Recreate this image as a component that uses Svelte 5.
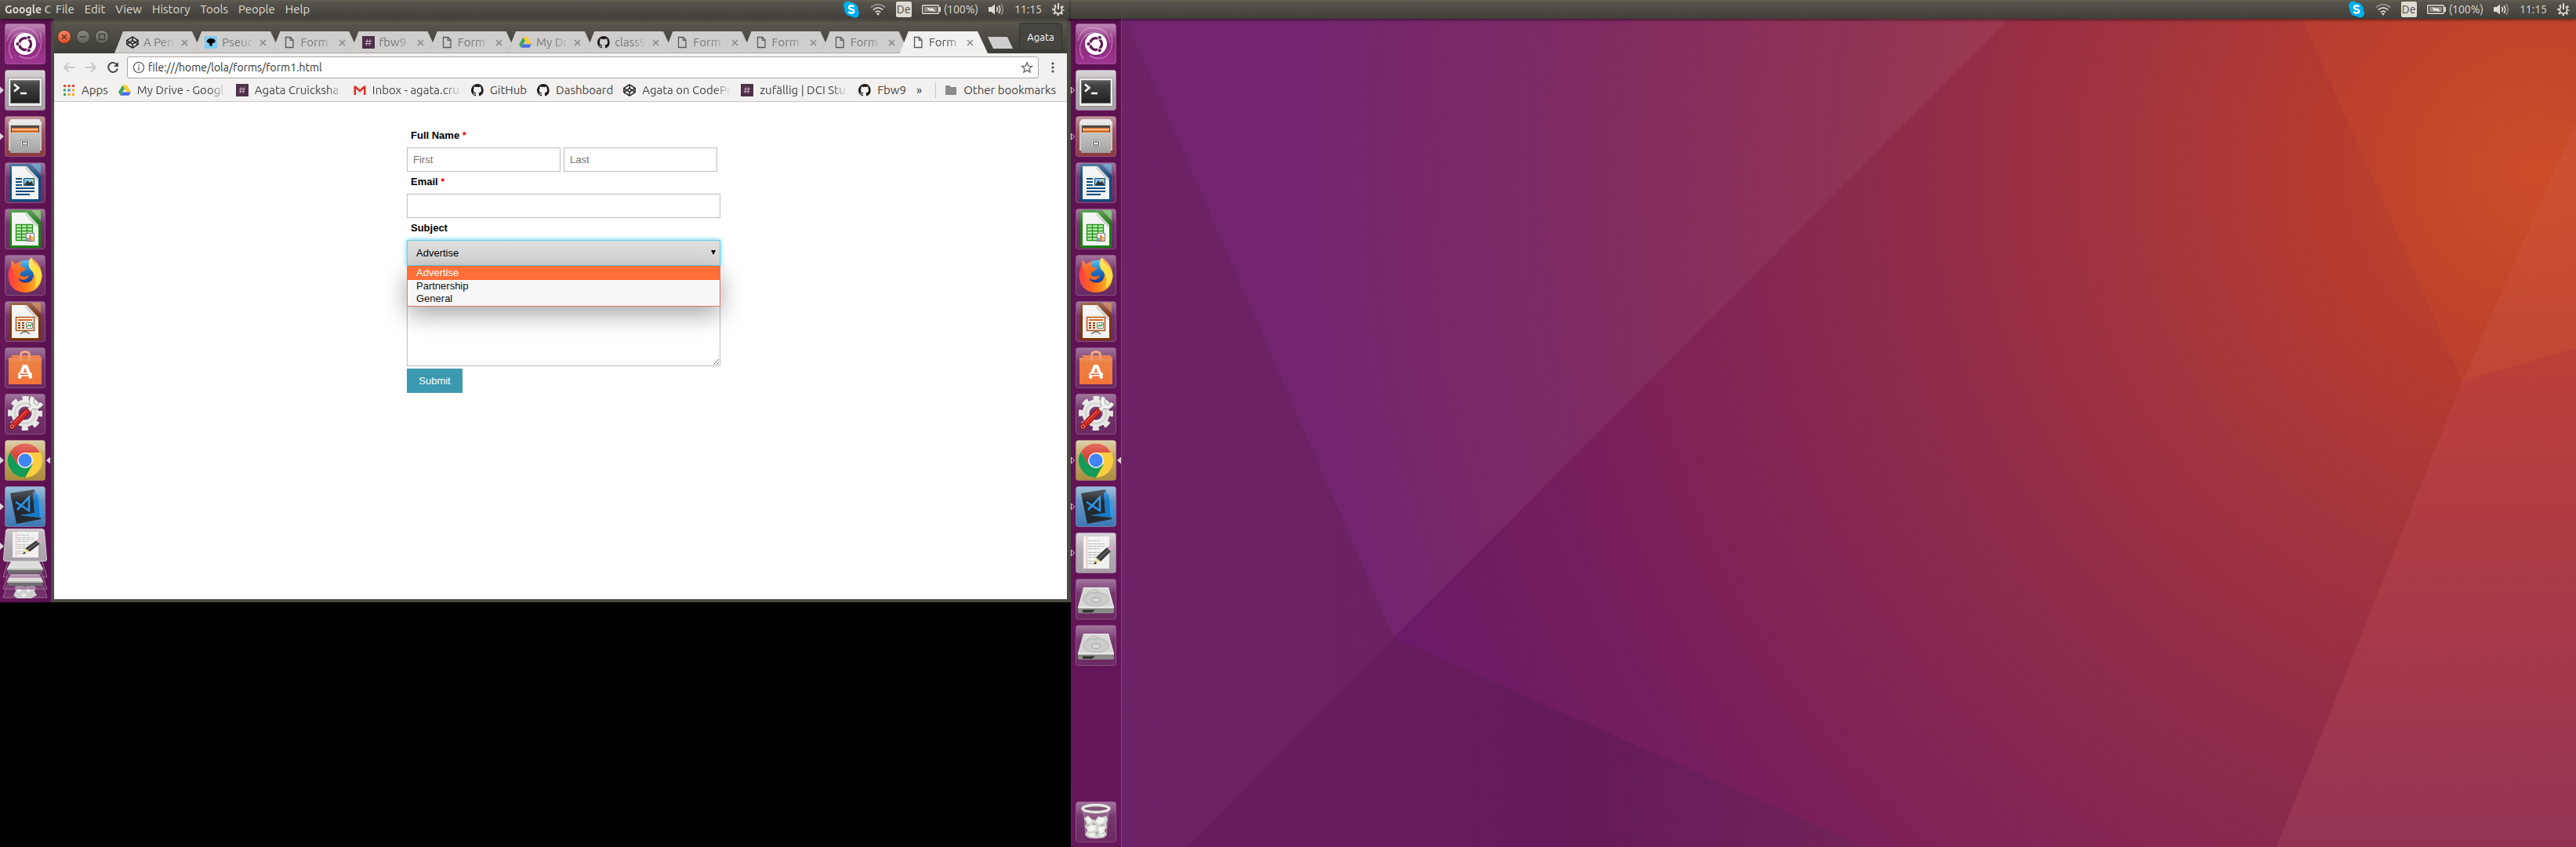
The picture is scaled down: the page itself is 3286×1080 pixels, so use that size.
<script>
  const menus = ['File', 'Edit', 'View', 'History', 'Tools', 'People', 'Help'];

  const tabs = [
    { icon: 'codepen', title: 'A Pen' },
    { icon: 'dino', title: 'Pseud' },
    { icon: 'page', title: 'Form' },
    { icon: 'hash', title: 'fbw9 |' },
    { icon: 'page', title: 'Form' },
    { icon: 'drive', title: 'My Dr' },
    { icon: 'github', title: 'class9' },
    { icon: 'page', title: 'Form' },
    { icon: 'page', title: 'Form' },
    { icon: 'page', title: 'Form' },
    { icon: 'page', title: 'Form', active: true }
  ];

  const bookmarks = [
    { icon: 'apps', title: 'Apps' },
    { icon: 'drive', title: 'My Drive - Googl', long: true },
    { icon: 'hash', title: 'Agata Cruicksha', long: true },
    { icon: 'gmail', title: 'Inbox - agata.cru', long: true },
    { icon: 'github', title: 'GitHub' },
    { icon: 'github', title: 'Dashboard' },
    { icon: 'codepen', title: 'Agata on CodePe', long: true },
    { icon: 'hash', title: 'zufällig | DCI Stu', long: true },
    { icon: 'github', title: 'Fbw9' }
  ];

  const apps = [
    { id: 'dash', label: 'Search your computer' },
    { id: 'terminal', label: 'Terminal', running: true },
    { id: 'files', label: 'Files', running: true },
    { id: 'writer', label: 'LibreOffice Writer' },
    { id: 'calc', label: 'LibreOffice Calc' },
    { id: 'firefox', label: 'Firefox' },
    { id: 'impress', label: 'LibreOffice Impress' },
    { id: 'software', label: 'Ubuntu Software' },
    { id: 'settings', label: 'System Settings' },
    { id: 'chrome', label: 'Google Chrome', running: true, focused: true },
    { id: 'vscode', label: 'Visual Studio Code', running: true }
  ];
  const moreApps = [
    { id: 'gedit', label: 'Text Editor', running: true },
    { id: 'disk', label: 'Volume 1' },
    { id: 'disk', label: 'Volume 2' }
  ];

  const tileFill = {
    dash: 'url(#t-dash)', terminal: 'url(#t-grey)', files: 'url(#t-red)', chrome: 'url(#t-gold)',
    vscode: 'url(#t-blue)', gedit: 'url(#t-grey)'
  };

  const subjects = ['Advertise', 'Partnership', 'General'];
  let subject = $state('Advertise');
  let url = $state('file:///home/lola/forms/form1.html');
</script>

{#snippet small(name)}
  <svg class="small" viewBox="0 0 16 16" aria-hidden="true">
    {#if name === 'codepen'}
      <g fill="none" stroke="#222" stroke-width="1.5" stroke-linejoin="round">
        <path d="M8 .9 15.1 5.4V10.6L8 15.1.9 10.6V5.4Z" />
        <path d="M.9 5.4 8 10.4 15.1 5.4M.9 10.6 8 5.6 15.1 10.6M8 .9V5.6M8 10.4V15.1" />
      </g>
    {:else if name === 'dino'}
      <path fill="#7ecbf3" d="M0 0H16V16H0Z" />
      <path d="M2.5 6.5Q4 3.2 8 3 12.5 2.8 13.8 6.2L13 8.2 10.4 8.8 9.6 11 8.6 13.2 6 11.4 6.2 9 3.8 8.6Z" />
    {:else if name === 'page'}
      <path d="M3.5 1.5H9.5L13 5V14.5H3.5ZM9.3 1.7V5.3H13" fill="none" stroke="#5a5a5a" stroke-width="1.3" />
    {:else if name === 'hash'}
      <path fill="#4f3149" d="M0 0H16V16H0Z" />
      <path d="M6.6 4 5.4 12M10.2 4 9 12M4.2 6.5H11.9M3.8 9.5H11.4" stroke="#c9a9c2" stroke-width="1" />
    {:else if name === 'drive'}
      <path fill="#3fa65b" d="M5.3 1.5 0 10.6 2.7 14.8 8 5.9Z" />
      <path fill="#fbcb2c" d="M5.3 1.5H10.6L16 10.6H10.7Z" />
      <path fill="#4a68ea" d="M5.3 10.6H16L13.4 14.8H2.7Z" />
    {:else if name === 'github'}
      <path fill="#1b1817" d="M8 0a8 8 0 0 0-2.5 15.6c.4.1.5-.2.5-.4v-1.5c-2.2.5-2.7-1-2.7-1-.4-.9-.9-1.2-.9-1.2-.7-.5.1-.5.1-.5.8.1 1.2.8 1.2.8.7 1.2 1.9.9 2.3.7.1-.5.3-.9.5-1.1-1.8-.2-3.6-.9-3.6-4 0-.9.3-1.6.8-2.1-.1-.2-.4-1 .1-2.1 0 0 .7-.2 2.2.8a7.5 7.5 0 0 1 4 0c1.5-1 2.2-.8 2.2-.8.4 1.1.2 1.9.1 2.1.5.6.8 1.3.8 2.1 0 3.1-1.9 3.7-3.7 3.9.3.3.6.8.6 1.5v2.2c0 .2.1.5.6.4A8 8 0 0 0 8 0Z" />
    {:else if name === 'apps'}
      <path fill="#ee4024" d="M1 1H4V4H1ZM6.5 1H9.5V4H6.5ZM12 1H15V4H12Z" />
      <path fill="#3fa65b" d="M1 6.5H4V9.5H1ZM1 12H4V15H1Z" />
      <path fill="#4176e6" d="M6.5 6.5H9.5V9.5H6.5Z" />
      <path fill="#f5a623" d="M12 6.5H15V9.5H12ZM6.5 12H9.5V15H6.5ZM12 12H15V15H12Z" />
    {:else if name === 'gmail'}
      <path fill="#eceae8" d="M1 3H15V14H1Z" />
      <path fill="none" stroke="#d8d6d4" d="M3.5 13.5 8 9 12.5 13.5" />
      <path fill="#d93025" d="M.5 2.5H2.8L8 7.2 13.2 2.5H15.5V14H13V6.2L8 10.4 3 6.2V14H.5Z" />
    {:else if name === 'folder'}
      <path fill="#8b8b8b" d="M1 2H6.5L8 4H15V14H1Z" />
    {/if}
  </svg>
{/snippet}

{#snippet sheet(c1, c2)}
  <path fill={c1} d="M9 2H32L46 17V47Q46 50 43 50H9Q6 50 6 47V5Q6 2 9 2Z" />
  <path fill={c2} d="M34 2H44Q46 2 46 4V15Z" />
  <path fill="#f3f3f2" d="M9 5H28L43 21V47H9Z" />
  <path fill="#cfcfce" d="M27 5 43 21V25L25 7Z" />
{/snippet}

{#snippet diskArt()}
  <path fill="#d6d6d5" d="M10 11H42L49 36H3Z" />
  <path fill="none" stroke="#efefee" d="M10.5 11.5H41.5L48 35" />
  <ellipse cx="26" cy="26" rx="16" ry="9" fill="#cbcbca" stroke="#b2b2b1" />
  <ellipse cx="26" cy="27" rx="5.5" ry="3" fill="#d9d9d8" stroke="#9f9f9e" />
  <path fill="none" stroke="#b2b2b1" d="M13 21Q18 13 27 14L30 16 24 19" />
  <path fill="#8a8a89" d="M3 36H49V42Q49 44 47 44H5Q3 44 3 42Z" />
  <path fill="#efefee" d="M3 35.5H49V37.5H3Z" />
  <path fill="#333" d="M9 39.5H25L21 43H9Z" />
{/snippet}

{#snippet paperAndPencil()}
  <path fill="#f1f1f0" d="M10 5H43V46H10Z" />
  <path stroke="#e7b6bd" d="M14.5 5V46" />
  <path stroke="#b7b7b6" stroke-dasharray="5 1" d="M16 10.5H31M16 14.5H37M16 17.5H37M16 20.5H30M16 25.5H36M16 28.5H34M16 31.5H33M16 36.5H26M16 39.5H27" />
  <path fill="#3b3b3a" d="M26 32 40 19 45 24 32 37Z" />
  <path stroke="#6e6e6d" stroke-width="1.5" d="M29 34 42 22" />
  <path fill="#d7a9cc" d="M40 19 44 16Q48 17 48.5 20L45 24Z" />
  <path fill="#efe3a0" d="M26 32 32 37 24 40Z" />
  <path fill="#222" d="M25 37 27 39 23 41Z" />
{/snippet}

{#snippet trashArt()}
  <path fill="#d9cfd8" fill-opacity=".22" stroke="#c9b6c6" stroke-opacity=".6" d="M10 9 13 43Q13 47 26 47T39 43L42 9Z" />
  <path fill="#d3d5d1" d="M11 21 16 18 20 22 25 24 29 19 34 20 39 18 41 23 39 28 40 33 37 37 40 42 35 46 26 47 17 46 12 42 15 37 12 32 14 28Z" />
  <path fill="#f2f4f0" d="M13 21 18 20 21 26 16 28ZM29 20 37 21 36 27 30 29 26 26ZM18 31 26 29 25 37 18 38 15 34ZM29 33 37 32 36 38 31 42ZM17 41 24 40 25 45 17 44ZM29 43 37 41 34 45Z" />
  <path fill="#a9aca7" d="M22 27 27 29 23 31ZM32 30 37 28 34 32ZM25 39 30 38 27 43ZM14 29 18 30 15 32Z" />
  <ellipse cx="26" cy="9" rx="17" ry="4.5" fill="#67305c" stroke="#dfe0dd" stroke-width="3.5" />
{/snippet}

{#snippet appArt(id)}
  {#if id === 'dash'}
    <g fill="none" stroke="#e9b8e0" stroke-opacity=".45" stroke-width="1.5">
      <path d="M3 22Q8 3 27 6 42 8 44 25" /><path d="M10 45Q2 34 8 22 14 10 26 12" /><path d="M45 12Q50 30 40 41 30 48 18 41" />
    </g>
    <circle cx="26" cy="27" r="14.5" fill="#5d1251" fill-opacity=".4" />
    <circle cx="26" cy="26" r="14" fill="#fff" />
    <circle cx="26" cy="26" r="7.5" fill="none" stroke="#5f1a55" stroke-width="3.4" />
    <path stroke="#fff" stroke-width="1.5" d="M26 26H14M26 26 32 15.6M26 26 32 36.4" />
    <circle cx="26" cy="26" r="5.5" fill="#fff" />
    <g fill="#5f1a55" stroke="#fff"><circle cx="16.5" cy="26" r="2.6" /><circle cx="30.7" cy="17.8" r="2.6" /><circle cx="30.7" cy="34.2" r="2.6" /></g>
  {:else if id === 'terminal'}
    <path fill="#ececeb" stroke="#8f8c90" d="M4.5 10.5H47.5V46.5H4.5Z" />
    <path fill="url(#g-term)" stroke="#777" d="M7.5 13.5H44.5V42.5H7.5Z" />
    <path fill="none" stroke="#fff" stroke-width="2.5" d="M12 18.5 17.5 23 12 27.5M20 30H28" />
  {:else if id === 'files'}
    <path fill="#c9c9c8" d="M5 8H47V44H5Z" />
    <path fill="#e4e4e3" d="M8 4H44L47 8V11H5V8Z" />
    <path fill="#3d3430" d="M8 12H44V23H8Z" />
    <path fill="#e8843f" d="M9 15H43V23H9Z" /><path stroke="#ffd5a8" d="M9 17.5H43" /><path stroke="#b9541b" d="M9 19.5H43" />
    <path fill="url(#g-drawer)" d="M7 21H45V47H7Z" />
    <rect x="20" y="31" width="12" height="8" rx="1.5" fill="#ededec" stroke="#8a8a89" />
    <rect x="22.5" y="33" width="7" height="4" fill="#ddd" stroke="#444" />
  {:else if id === 'writer'}
    {@render sheet('#0a4d80', '#3f8fc0')}
    <path stroke="#0a4d80" stroke-width="2" d="M14 21H22M14 25H22M14 29H22M14 33H38M14 37H38M14 41H32" />
    <path fill="#86c6ec" stroke="#0a4d80" d="M24.5 20.5H37.5V29.5H24.5Z" /><path fill="#333" d="M25 29 29 23 32 26 34 24 37 29Z" />
    <circle cx="34.5" cy="22.5" r="1.5" fill="#e2c94a" />
  {:else if id === 'calc'}
    {@render sheet('#18840f', '#5fbb53')}
    <path fill="#c5f0b8" stroke="#239318" stroke-width="1.3" d="M14.5 20.5H35.5V40.5H14.5ZM14.5 24.5H35.5M14.5 28.5H35.5M14.5 32.5H35.5M14.5 36.5H35.5M21.5 20.5V40.5M28.5 20.5V40.5" />
    <path fill="#fff" stroke="#777" d="M27.5 31.5H37.5V41.5H27.5Z" />
    <path stroke="#e56a20" stroke-width="2.5" d="M32.5 34V41" /><path stroke="#3d8dd0" stroke-width="2" d="M29.5 37V41" /><path stroke="#e8b21c" stroke-width="2" d="M35.5 36V41" />
  {:else if id === 'impress'}
    {@render sheet('#7d3409', '#b96a33')}
    <path fill="#fdf1e8" stroke="#b1531a" stroke-width="1.5" d="M14.5 20.5H37.5V37.5H14.5Z" />
    <path stroke="#d26a2c" stroke-width="2" d="M17 24H35" /><path stroke="#8a3c10" stroke-width="3" stroke-dasharray="2 1" d="M18.5 27V36M23.5 27V36" />
    <path fill="#fff" stroke="#777" d="M27.5 27.5H35.5V34.5H27.5Z" /><path fill="none" stroke="#2a8f35" stroke-width="1.2" d="M28.5 33 30.5 30 32.5 32 34.5 28.5" />
    <path fill="none" stroke="#6d6d6d" stroke-width="1.5" d="M20 42 24 39H28L32 42M26 38V40" />
  {:else if id === 'firefox'}
    <path fill="url(#g-fox)" d="M9 6Q10 10 12 13 19 6 30 7L34 4Q47 12 47.5 27 46 47 26 48 6 47 4.5 27 4.500 18 8 14 8 9 9 6Z" />
    <path fill="url(#g-globe)" d="M15 13Q20 6 31 6.500 29 12 34 18 40 26 34 33 27 38 19 33 15 26 15 13Z" />
    <path fill="#f9691f" d="M9 6Q12 11 15 13 17 9 22 9 19 12 21 15L27 17Q26 20 21 22 18 24 21 27 26 29 31 26 30 31 24 32 17 31 14 26 8 18 9 6Z" />
    <path fill="#ffdf45" d="M34 3Q35 9 41 14 47 19 47.500 27 45 38 38 42 42 30 36 22 29 16 31 9 31 6 34 3Z" />
  {:else if id === 'software'}
    <path fill="#e8733c" d="M5 13H10L8 10H44L47 13V18H5Z" />
    <path fill="url(#g-bag)" d="M5 14H47V47H5Z" />
    <path fill="none" stroke="#f09060" stroke-width="3" d="M20.5 17V10Q20.5 5.5 26 5.5T31.5 10V17" />
    <path fill="none" stroke="#fff" stroke-width="4" d="M18.5 39.5 24.5 24H27.5L33.5 39.5" />
    <rect x="17" y="32" width="18" height="4.5" rx="2.2" fill="#fff" /><rect x="19" y="33.5" width="11" height="1.5" fill="#e9642a" />
  {:else if id === 'settings'}
    <circle cx="26" cy="25" r="19" fill="none" stroke="#e6e6e5" stroke-width="6" stroke-dasharray="8 6.923" stroke-dashoffset="4" />
    <circle cx="26" cy="25" r="13" fill="none" stroke="#e6e6e5" stroke-width="9" />
    <circle cx="26" cy="25" r="13" fill="none" stroke="#cfcfce" stroke-width="2" />
    <path fill="none" stroke="#8c8c8b" stroke-width="6" d="M30 22 38 14M36 4.500Q32 11 37 15.500T47 12" />
    <path fill="none" stroke="#efefee" stroke-width="4.500" d="M30 22 38 14M36 4.500Q32 11 37 15.500T47 12" />
    <path stroke="#8e1311" stroke-width="8" stroke-linecap="round" d="M9.500 42 28 23" /><path stroke="#cf2926" stroke-width="6" stroke-linecap="round" d="M9.500 42 28 23" />
    <path stroke="#ee6a62" d="M12 37 27 22" /><circle cx="9.5" cy="42" r="2" fill="#7d1412" stroke="#e8a09d" />
  {:else if id === 'chrome'}
    <circle cx="26" cy="26" r="22" fill="#fcce3f" />
    <path fill="#149b57" d="M6.9 15A22 22 0 0 0 26 48L35.500 31.500 26 26 16.500 31.500Z" />
    <path fill="#d9453a" d="M6.9 15A22 22 0 0 1 45 16H26L16.500 31.500Z" />
    <circle cx="26" cy="26" r="10" fill="#f4f4f3" /><circle cx="26" cy="26" r="8.5" fill="#4184f3" />
  {:else if id === 'vscode'}
    <path fill="#252a31" d="M7 9 38 4 46 42 15 48Z" />
    <path fill="#2d9bea" d="M36 7 43 10 48 36 45 40 20 37 38 34Z" /><path fill="#1979c4" d="M36 7 38 34 20 37 45 40 42 12Z" />
    <path fill="none" stroke="#2c93e3" stroke-width="2.6" d="M14 20 31 31 31 14 16 30" />
  {:else if id === 'gedit'}
    {@render paperAndPencil()}
  {:else if id === 'disk'}
    {@render diskArt()}
  {:else if id === 'trash'}
    {@render trashArt()}
  {/if}
{/snippet}

{#snippet launcherItem(app, hollow)}
  <button class="app" aria-label={app.label}>
    <svg viewBox="0 0 64 52" aria-hidden="true">
      <g transform="translate(6 0)">
        <rect x=".5" y=".5" width="51" height="51" rx="3" fill={tileFill[app.id] ?? 'url(#t-plain)'} stroke="#fff" stroke-opacity=".22" />
        {@render appArt(app.id)}
        <path fill="url(#gloss)" d="M3 1H49Q51 1 51 4V16Q26 24 1 16V4Q1 1 3 1Z" />
      </g>
      {#if app.running && hollow}
        <path d="M.5 22 4.5 26 .5 30Z" fill="#5d1251" stroke="#e0d5dd" />
      {:else if app.running}
        <path d="M0 21.5 5 26 0 30.5Z" fill="#ddd6db" />
      {/if}
      {#if app.focused}<path d="M64 21.5 59 26 64 30.5Z" fill="#ddd6db" />{/if}
    </svg>
  </button>
{/snippet}

{#snippet indicators()}
  <div class="indicators">
    <button aria-label="Skype">
      <svg width="22" height="22" viewBox="0 0 22 22"><circle cx="6.5" cy="6" r="5.5" fill="#00aff0" /><circle cx="15.5" cy="16" r="5.5" fill="#00aff0" /><circle cx="11" cy="11" r="8.8" fill="#00aff0" /><path d="M14.3 7.8Q13.5 6.2 11 6.2 8 6.3 8 8.4 8 10.2 11 10.8 14.3 11.5 14.3 13.4 14 15.7 11 15.7 8.2 15.6 7.6 13.7" fill="none" stroke="#fff" stroke-width="2.3" /></svg>
    </button>
    <button aria-label="Network">
      <svg width="20" height="16" viewBox="0 0 20 16"><g fill="none" stroke-width="1.7"><path d="M.8 5.5Q10-2.2 19.2 5.5" stroke="#918f88" /><path d="M3.8 8.7Q10 3.2 16.2 8.7" stroke="#dfdbd2" /><path d="M6.7 11.7Q10 8.7 13.3 11.7" stroke="#dfdbd2" /></g><path fill="#dfdbd2" d="M8 13.5Q10 11.5 12 13.5L10 15.7Z" /></svg>
    </button>
    <button class="lang">De</button>
    <button class="battery">
      <svg width="24" height="12" viewBox="0 0 24 12" aria-hidden="true"><rect x=".7" y=".7" width="20.6" height="10.6" rx="1" fill="none" stroke="#dfdbd2" stroke-width="1.4" /><rect x="3" y="3" width="16" height="6" fill="#918f88" /><path fill="#dfdbd2" d="M22 3H24V9H22Z" /><path fill="#f4f1ea" d="M6 3 12 5.5 12.500 3.500 17 9 10.500 7 10 8.500Z" /></svg>
      <span>(100%)</span>
    </button>
    <button aria-label="Sound">
      <svg width="20" height="16" viewBox="0 0 20 16"><path fill="#dfdbd2" d="M0 5H3.5L8 1.5V14.5L3.5 11H0Z" /><g fill="none" stroke-width="1.6"><path d="M10.5 5Q12.5 8 10.5 11" stroke="#dfdbd2" /><path d="M13 3Q16.5 8 13 13" stroke="#dfdbd2" /><path d="M16 1Q20.5 8 16 15" stroke="#918f88" /></g></svg>
    </button>
    <button>11:15</button>
    <button aria-label="System">
      <svg width="16" height="16" viewBox="0 0 16 16"><circle cx="8" cy="8.5" r="4.7" fill="none" stroke="#dfdbd2" stroke-width="1.8" /><circle cx="8" cy="8.5" r="6.5" fill="none" stroke="#dfdbd2" stroke-width="2.6" stroke-dasharray="2.3 2.805" stroke-dashoffset="1.1" /><path stroke="#4b4a44" stroke-width="5" d="M8 0V6" /><path stroke="#dfdbd2" stroke-width="2" d="M8 0V8" /></svg>
    </button>
  </div>
{/snippet}

<svg class="defs" aria-hidden="true">
  <defs>
    <linearGradient id="t-plain" x2="0" y2="1"><stop stop-color="#7c3f74" /><stop offset="1" stop-color="#6a2962" /></linearGradient>
    <linearGradient id="t-dash" x2="0" y2="1"><stop stop-color="#a55a98" /><stop offset=".5" stop-color="#8c2b7d" /><stop offset="1" stop-color="#a03591" /></linearGradient>
    <linearGradient id="t-grey" x2="0" y2="1"><stop stop-color="#cbc5ca" /><stop offset=".5" stop-color="#b3aab2" /><stop offset="1" stop-color="#a79ea8" /></linearGradient>
    <linearGradient id="t-red" x2="0" y2="1"><stop stop-color="#ab6c75" /><stop offset="1" stop-color="#8b3843" /></linearGradient>
    <linearGradient id="t-gold" x2="0" y2="1"><stop stop-color="#d2bd87" /><stop offset="1" stop-color="#ab8c3d" /></linearGradient>
    <linearGradient id="t-blue" x2="0" y2="1"><stop stop-color="#78a5cd" /><stop offset="1" stop-color="#3e79b4" /></linearGradient>
    <linearGradient id="gloss" x2="0" y2="1"><stop stop-color="#fff" stop-opacity=".28" /><stop offset="1" stop-color="#fff" stop-opacity="0" /></linearGradient>
    <linearGradient id="g-term" x2="0" y2="1"><stop stop-color="#4c4c4b" /><stop offset="1" stop-color="#1f1f1e" /></linearGradient>
    <linearGradient id="g-drawer" x2="0" y2="1"><stop stop-color="#c6c6c5" /><stop offset="1" stop-color="#a2a2a1" /></linearGradient>
    <linearGradient id="g-bag" x2="0" y2="1"><stop stop-color="#ea8345" /><stop offset="1" stop-color="#f37439" /></linearGradient>
    <linearGradient id="g-globe" x2="0" y2="1"><stop stop-color="#2cb1f2" /><stop offset="1" stop-color="#123a94" /></linearGradient>
    <linearGradient id="g-fox" x1="0" y1=".4" x2="1" y2=".5"><stop stop-color="#ff3a4a" /><stop offset=".45" stop-color="#ff6a1c" /><stop offset="1" stop-color="#ffc52e" /></linearGradient>
    <radialGradient id="wall" gradientUnits="userSpaceOnUse" cx="1870" cy="220" r="1560">
      <stop stop-color="#c94a27" /><stop offset=".17" stop-color="#b63b2e" /><stop offset=".36" stop-color="#a03340" />
      <stop offset=".56" stop-color="#8b2a4c" /><stop offset=".77" stop-color="#7b2059" /><stop offset="1" stop-color="#6b1a67" />
    </radialGradient>
    <linearGradient id="wall-left" x2="1"><stop stop-color="#6d2468" /><stop offset="1" stop-color="#6b2162" /></linearGradient>
    <linearGradient id="wall-right" x2="0" y2="1"><stop stop-color="#bd4038" /><stop offset="1" stop-color="#943455" /></linearGradient>
    <linearGradient id="wall-low" x2="1"><stop stop-color="#661d60" /><stop offset=".6" stop-color="#651a5a" /><stop offset="1" stop-color="#722458" /></linearGradient>
  </defs>
</svg>

<div class="desktop">
  <section class="screen primary">
    <header class="panel">
      <strong class="app-name">Google C</strong>
      <nav class="menus">
        {#each menus as menu}<button>{menu}</button>{/each}
      </nav>
      {@render indicators()}
    </header>
    <div class="workspace">
      <aside class="launcher">
        {#each apps as app}{@render launcherItem(app, false)}{/each}
        <button class="app stack" aria-label="More launcher items">
          <svg viewBox="0 0 64 94" aria-hidden="true">
            <path fill="#7e4477" fill-opacity=".6" stroke="#9d6d97" d="M9 72H55L60 88H4Z" />
            <path fill="#cfd0ce" d="M19 74 25 72 32 74 40 71 46 75 44 80 47 85 40 89H22L17 85 20 80Z" />
            <path fill="#f4f5f3" d="M22 75 28 78 23 82ZM34 75 40 77 35 82ZM27 83 34 84 30 88Z" />
            <path fill="#7e4477" fill-opacity=".5" stroke="#9d6d97" d="M10 58H54L60 77H4Z" />
            <path fill="#dededd" d="M14 58H50L55 67H9Z" /><path fill="#b9b9b8" d="M9 67H55V69H9Z" /><path fill="#6d6d6c" d="M9 69H55L53 73H11Z" />
            <path fill="#7e4477" fill-opacity=".4" stroke="#9d6d97" d="M10 42H54L60 62H4Z" />
            <path fill="#dededd" d="M14 42H50L55 51H9Z" /><path fill="#b9b9b8" d="M9 51H55V53H9Z" /><path fill="#6d6d6c" d="M9 53H55L53 57H11Z" />
            <path fill="url(#t-grey)" stroke="#d6d0d5" d="M10 .5H54Q56 .5 56.5 3L59.5 39Q59.5 41.5 57 41.5H7Q4.5 41.5 4.5 39L7.5 3Q8 .5 10 .5Z" />
            <g transform="translate(6 0) scale(1 .8)">{@render paperAndPencil()}</g>
            <path d="M0 18 5 22.5 0 27Z" fill="#ddd6db" />
          </svg>
        </button>
      </aside>

      <div class="window">
        <div class="titlebar">
          <div class="controls">
            <button class="close" aria-label="Close window"><svg viewBox="0 0 16 16"><path d="M5 5 11 11M11 5 5 11" /></svg></button>
            <button aria-label="Minimize"><svg viewBox="0 0 16 16"><path d="M4 8H12" /></svg></button>
            <button aria-label="Maximize"><svg viewBox="0 0 16 16"><path d="M4.5 4.5H11.5V11.5H4.5Z" /></svg></button>
          </div>
          <div class="tabs" role="tablist">
            {#each tabs as tab}
              <div class="tab" class:active={tab.active}>
                <button class="tab-main" role="tab" aria-selected={!!tab.active}>
                  {@render small(tab.icon)}
                  <span class="fade">{tab.title}</span>
                </button>
                <button class="tab-close" aria-label="Close tab"><svg viewBox="0 0 9 9"><path d="M1 1 8 8M8 1 1 8" /></svg></button>
              </div>
            {/each}
          </div>
          <button class="new-tab" aria-label="New tab"></button>
          <button class="profile">Agata</button>
        </div>

        <div class="toolbar">
          <div class="nav-row">
            <button class="nav" aria-label="Back"><svg viewBox="0 0 16 16"><path d="M15 8H2M8 2 2 8 8 14" /></svg></button>
            <button class="nav" aria-label="Forward"><svg viewBox="0 0 16 16"><path d="M1 8H14M8 2 14 8 8 14" /></svg></button>
            <button class="nav reload" aria-label="Reload"><svg viewBox="0 0 16 16"><path d="M13.2 4.5A6 6 0 1 0 14 9.5" /><path class="head" d="M15 1V7H9Z" /></svg></button>
            <div class="omnibox">
              <button aria-label="Site information"><svg viewBox="0 0 16 16"><circle cx="8" cy="8" r="6.6" /><path d="M8 7V12M8 4.2V5.8" /></svg></button>
              <input aria-label="Address" bind:value={url} />
              <button aria-label="Bookmark this page"><svg viewBox="0 0 16 16"><path d="M8 1.8 9.8 6.1 14.5 6.5 10.9 9.5 12 14 8 11.6 4 14 5.1 9.5 1.5 6.5 6.2 6.1Z" /></svg></button>
            </div>
            <button class="dots" aria-label="Chrome menu"><svg viewBox="0 0 16 16"><circle cx="8" cy="3" r="1.6" /><circle cx="8" cy="8" r="1.6" /><circle cx="8" cy="13" r="1.6" /></svg></button>
          </div>
          <nav class="bookmarks">
            {#each bookmarks as b}
              <a href="#bookmark">{@render small(b.icon)}<span class:fade={b.long}>{b.title}</span></a>
            {/each}
            <button class="overflow" aria-label="More bookmarks">»</button>
            <a class="other" href="#bookmark">{@render small('folder')}<span>Other bookmarks</span></a>
          </nav>
        </div>

        <main class="page">
          <form onsubmit={(e) => e.preventDefault()}>
            <label for="first">Full Name <em>*</em></label>
            <div class="names">
              <input id="first" type="text" placeholder="First" />
              <input type="text" placeholder="Last" aria-label="Last name" />
            </div>
            <label for="email">Email <em>*</em></label>
            <input id="email" type="email" />
            <label for="subject">Subject</label>
            <div class="select">
              <select id="subject" bind:value={subject}>
                {#each subjects as s}<option>{s}</option>{/each}
              </select>
              <ul role="listbox" aria-label="Subject">
                {#each subjects as s}
                  <li role="option" aria-selected={s === subject} class:selected={s === subject}>{s}</li>
                {/each}
              </ul>
            </div>
            <textarea aria-label="Your message"></textarea>
            <button class="submit">Submit</button>
          </form>
        </main>
      </div>
    </div>
  </section>

  <section class="screen secondary">
    <svg class="wallpaper" viewBox="0 0 1920 1080" preserveAspectRatio="none" aria-hidden="true">
      <path fill="url(#wall)" d="M0 0H1920V1080H0Z" />
      <path fill="#fff" fill-opacity=".05" d="M0 0H1221L412 813Z" />
      <path fill="url(#wall-left)" d="M0 0H60L412 813 148 1080H0Z" />
      <path fill="url(#wall-low)" d="M412 813 1014 1080H148Z" />
      <path fill="#e0602c" fill-opacity=".14" d="M1560 0H1920V155L1775 486Z" />
      <path fill="#e0684c" fill-opacity=".26" d="M1920 155V444L1775 486Z" />
      <path fill="url(#wall-right)" d="M1920 444V1080H1538L1775 486Z" />
    </svg>
    <header class="panel">{@render indicators()}</header>
    <div class="workspace">
      <aside class="launcher edge">
        {#each [...apps, ...moreApps] as app}{@render launcherItem(app, true)}{/each}
        <div class="bottom">{@render launcherItem({ id: 'trash', label: 'Trash' }, true)}</div>
      </aside>
    </div>
  </section>
</div>

<style>
  :global(body) { background: #000; }
  .defs { position: absolute; width: 0; height: 0; }
  .desktop {
    display: flex;
    align-items: flex-start;
    min-height: 100vh;
    font-family: Ubuntu, "Noto Sans", "Open Sans", sans-serif;
    font-size: 14px;
    line-height: 20px;
  }
  button { border: 0; padding: 0; margin: 0; background: none; font: inherit; color: inherit; }
  input, select, textarea { box-sizing: border-box; margin: 0; }
  svg { display: block; }
  .screen { position: relative; display: flex; flex-direction: column; min-width: 0; }
  .primary { flex: 1366 1 0; background: #5d1251; }
  .secondary { flex: 1920 1 0; min-height: 100vh; }
  .wallpaper { position: absolute; inset: 0; width: 100%; height: 100%; }

  .panel {
    position: relative;
    z-index: 2;
    display: flex;
    align-items: center;
    height: 24px;
    padding: 0 8px 0 6px;
    background: linear-gradient(#625f4f, #56544b 3px, #403f3a);
    color: #dfdbd2;
    box-shadow: 0 1px 4px rgba(0, 0, 0, .6);
    white-space: nowrap;
  }
  .app-name { width: 65px; overflow: hidden; mask-image: linear-gradient(90deg, #000 75%, transparent); }
  .menus { display: flex; gap: 13px; font-size: 15px; }
  .indicators { display: flex; align-items: center; gap: 13px; margin-left: auto; }
  .lang { width: 20px; border-radius: 2px; background: #dfdbd2; color: #4a4943; text-align: center; }
  .battery { display: flex; align-items: center; gap: 4px; }

  .workspace { position: relative; display: flex; flex: 1; }
  .launcher {
    display: flex;
    flex-direction: column;
    gap: 7px;
    box-sizing: border-box;
    width: 65px;
    padding-top: 6px;
    background: linear-gradient(90deg, #641556, #5a1150);
  }
  .edge { padding-bottom: 6px; border-right: 1px solid #7d4079; background: linear-gradient(#5b1150, #67175c); }
  .app { display: block; width: 64px; }
  .app svg { width: 64px; }
  .stack { margin-top: -5px; }
  .bottom { margin-top: auto; }

  .window {
    flex: 1;
    display: flex;
    flex-direction: column;
    min-width: 0;
    border: solid #4b4a43;
    border-width: 0 5px 4px 4px;
    border-radius: 6px 6px 0 0;
    background: #4b4a43;
  }
  .titlebar {
    display: flex;
    height: 43px;
    padding: 0 6px 0 5px;
    border-top: 1px solid #7a7970;
    background: linear-gradient(#5c5a4f, #3d3c37);
  }
  .controls { display: flex; gap: 8px; padding-top: 14px; width: 72px; }
  .controls button { width: 16px; height: 16px; border-radius: 50%; background: linear-gradient(#8a887e, #64635b); box-shadow: 0 0 0 1px #3b3a35; }
  .controls .close { background: linear-gradient(#f98460, #ea4c1c); }
  .controls svg { fill: none; stroke: #3b3a35; stroke-width: 1.3; }
  .tabs { display: flex; flex: 1; min-width: 0; padding: 15px 12px 0 0; font-size: 15px; }
  .tab {
    position: relative;
    display: flex;
    align-items: center;
    flex: 1 1 0;
    min-width: 0;
    margin-right: -12px;
    padding: 0 16px 0 15px;
    background: #a9a8a5;
    color: #777;
    clip-path: polygon(11px 0, calc(100% - 13px) 0, 100% 100%, 0 100%);
  }
  .tab::before {
    content: "";
    position: absolute;
    inset: 0 0 1px;
    background: #d0cecc;
    clip-path: polygon(11px 0, calc(100% - 14px) 0, calc(100% - 1px) 100%, 0 100%);
  }
  .tab.active, .tab.active::before { background: #f2f1ef; color: #4c4c4c; }
  .tab-main { position: relative; display: flex; flex: 1; gap: 6px; align-items: center; min-width: 0; text-align: left; }
  .tab-close { position: relative; width: 9px; margin: 0 2px 0 10px; }
  .tab-close svg { stroke: #8b8a88; stroke-width: 1.6; }
  .small { flex: none; width: 16px; height: 16px; }
  .fade { overflow: hidden; white-space: nowrap; mask-image: linear-gradient(90deg, #000 calc(100% - 20px), transparent); }
  .tab .fade { flex: 1; mask-image: linear-gradient(90deg, #000 60%, rgba(0, 0, 0, .2)); }
  .new-tab { width: 32px; height: 15px; margin: 22px 8px 0 0; background: #d0cecc; clip-path: polygon(0 0, 25px 0, 100% 100%, 7px 100%); }
  .profile { width: 55px; height: 36px; margin-top: 4px; border: 1px solid #33322e; border-radius: 4px; background: #45443e; color: #fff; font-size: 13px; }

  .toolbar { background: #f2f1ef; border-bottom: 1px solid #c9c8c6; color: #444; }
  .nav-row { display: flex; align-items: center; padding: 4px 10px 4px 11px; }
  .nav { width: 16px; margin-right: 12px; }
  .nav svg, .omnibox svg { fill: none; stroke: #cbcac8; stroke-width: 2; }
  .nav.reload { margin-right: 10px; }
  .nav.reload svg { stroke: #4a4a4a; }
  .nav .head { fill: #4a4a4a; stroke: none; }
  .omnibox {
    display: flex;
    align-items: center;
    flex: 1;
    height: 26px;
    padding: 0 6px;
    border: 1px solid #aaa9a7;
    border-radius: 3px;
    background: #fff;
  }
  .omnibox button { width: 16px; }
  .omnibox svg { stroke: #6a6a6a; stroke-width: 1.4; }
  .omnibox input { flex: 1; min-width: 0; padding: 0 0 0 4px; border: 0; outline: 0; background: none; color: #333; font: inherit; }
  .dots { width: 16px; margin-left: 10px; }
  .dots svg { fill: #4a4a4a; }
  .bookmarks { display: flex; align-items: center; gap: 13px; height: 25px; padding: 0 14px 4px 11px; box-sizing: border-box; font-size: 15px; white-space: nowrap; }
  .bookmarks a { display: flex; align-items: center; gap: 8px; color: inherit; text-decoration: none; }
  .bookmarks .fade { width: 113px; }
  .overflow { color: #333; }
  .bookmarks .other { margin-left: auto; padding-left: 11px; border-left: 1px solid #c9c8c6; }

  .page { flex: 1; min-height: 634px; padding-left: 8px; background: #fff; font-family: "Liberation Sans", Arial, sans-serif; }
  form { width: 400px; margin: 0 auto; padding-top: 30px; font-size: 13px; }
  label { display: block; padding: 0 0 3px 5px; font-weight: bold; line-height: 25px; color: #000; }
  em { color: #f00; font-style: normal; }
  .page input, textarea {
    display: block;
    width: 100%;
    height: 31px;
    padding: 0 7px;
    border: 1px solid #bebebe;
    border-radius: 0;
    background: #fff;
    font: 13px "Liberation Sans", Arial, sans-serif;
  }
  .names { display: flex; gap: 4px; padding-right: 4px; }
  .select { position: relative; }
  select {
    display: block;
    appearance: none;
    width: 100%;
    height: 33px;
    padding: 0 11px;
    border: 1px solid #6fd0e6;
    border-radius: 0;
    outline: 0;
    background: linear-gradient(#dedede, #d6d6d6);
    box-shadow: 0 0 6px #51cbee;
    color: #000;
    font: 13px "Liberation Sans", Arial, sans-serif;
  }
  .select::before {
    content: "";
    position: absolute;
    top: 13px;
    right: 6px;
    border: solid transparent;
    border-width: 6px 3px 0;
    border-top-color: #000;
  }
  .select ul {
    position: absolute;
    top: 100%;
    left: 0;
    right: 0;
    margin: 0;
    padding: 0 0 1px;
    list-style: none;
    border: solid #d9795e;
    border-width: 0 1px 1px;
    background: #f7f7f7;
    box-shadow: 0 10px 30px rgba(0, 0, 0, .35);
    line-height: 16px;
    color: #111;
  }
  .select li { padding-left: 11px; }
  .select .selected { padding-block: 1px; background: #ff6f37; color: #fff; }
  .page textarea { height: 100px; margin-top: 28px; }
  .submit { display: block; width: 71px; height: 31px; margin-top: 3px; background: #3b99b0; color: #fff; font-size: 13px; }
</style>
